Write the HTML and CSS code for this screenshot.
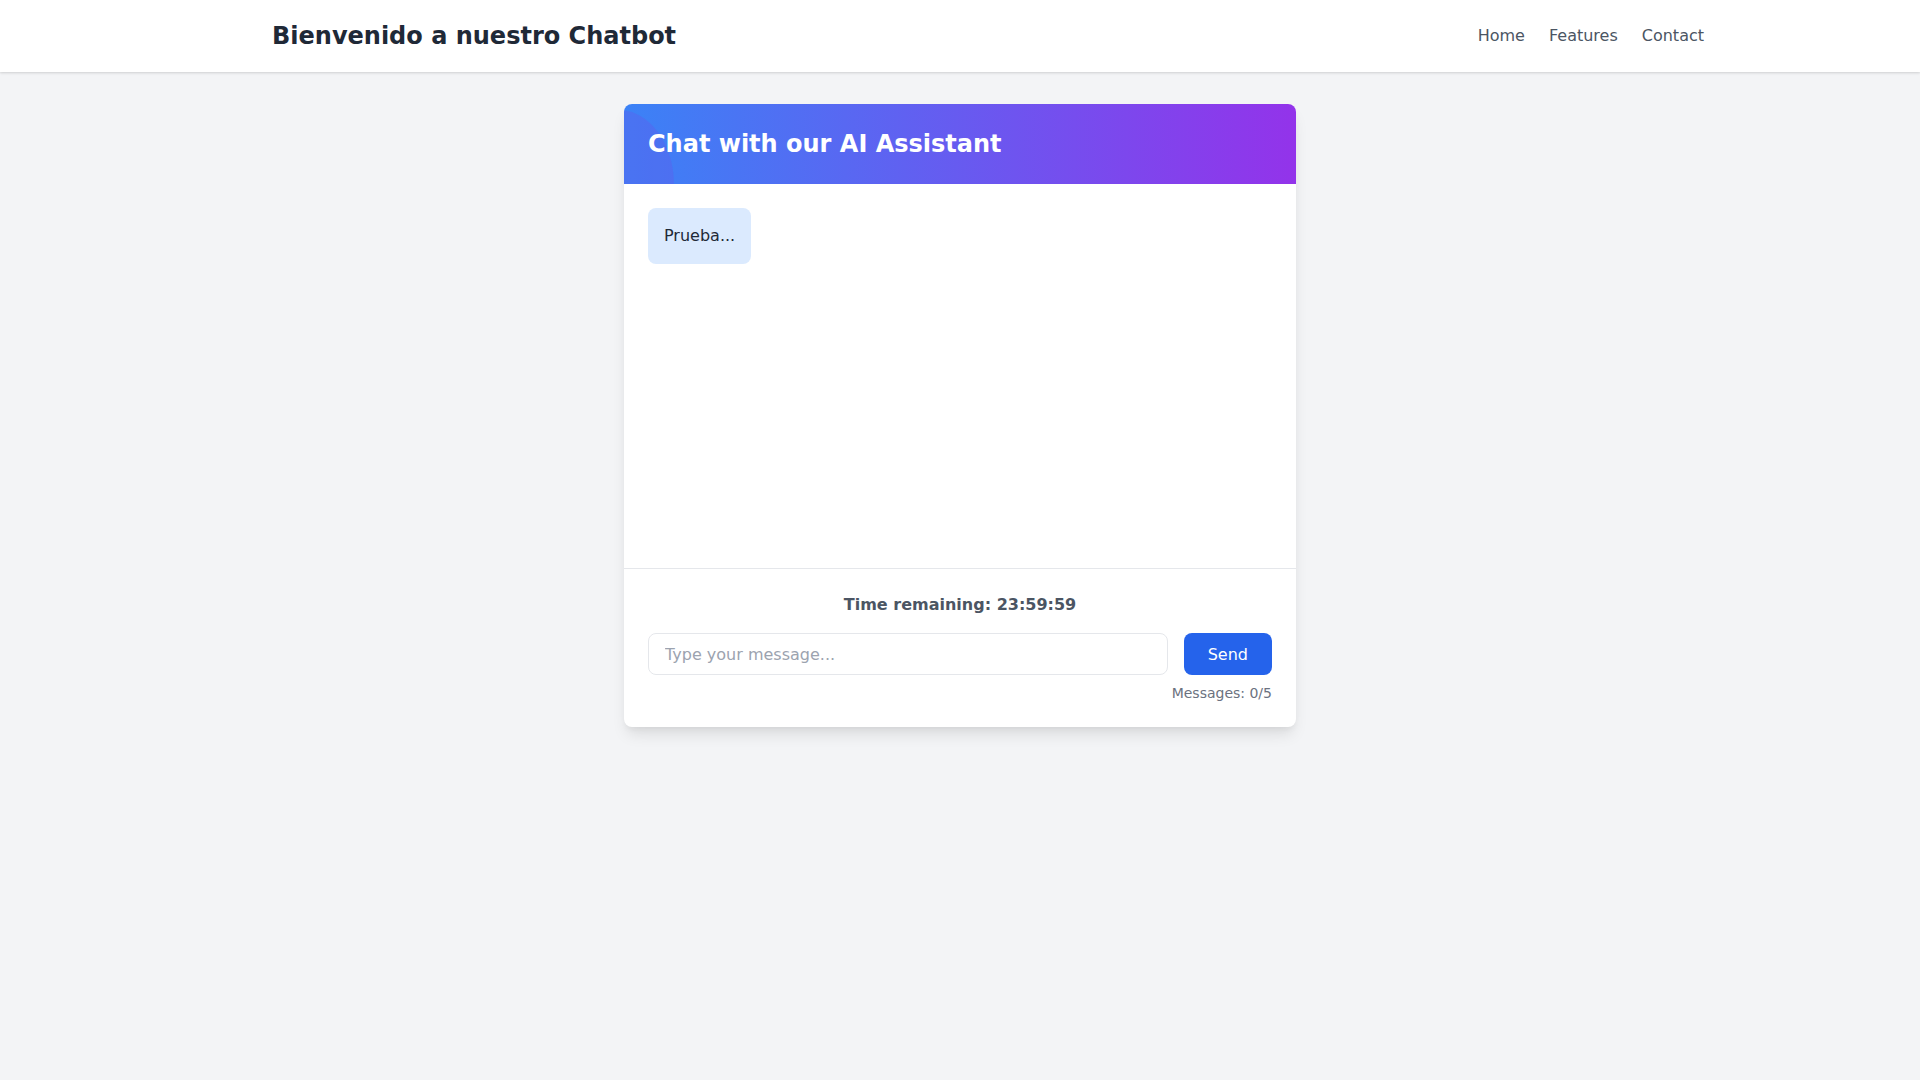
FILE: index.html
```html
<!DOCTYPE html>
<html lang="es">
<head>
<meta charset="utf-8">
<title>Chatbot</title>
<link rel="stylesheet" href="styles.css">
</head>
<body>
<header class="topbar">
  <h1 class="brand">Bienvenido a nuestro Chatbot</h1>
  <nav class="nav">
    <a href="#">Home</a>
    <a href="#">Features</a>
    <a href="#">Contact</a>
  </nav>
</header>
<main class="main">
  <section class="card">
    <div class="card-head">
      <span class="blob"></span>
      <h2>Chat with our AI Assistant</h2>
    </div>
    <div class="messages">
      <div class="bubble">Prueba...</div>
    </div>
    <div class="footer">
      <p class="timer">Time remaining: 23:59:59</p>
      <div class="row">
        <input class="input" type="text" placeholder="Type your message...">
        <button class="send">Send</button>
      </div>
      <p class="count">Messages: 0/5</p>
    </div>
  </section>
</main>
</body>
</html>
```

FILE: styles.css
```css
* { box-sizing: border-box; }
html, body { margin: 0; padding: 0; }
body {
  background: #f3f4f6;
  font-family: "DejaVu Sans", sans-serif;
  color: #1f2937;
  min-height: 1080px;
}
.topbar {
  height: 72px;
  background: #ffffff;
  box-shadow: 0 1px 3px rgba(0,0,0,0.1), 0 1px 2px rgba(0,0,0,0.06);
  display: flex;
  align-items: center;
  justify-content: space-between;
  padding: 0 216px 0 272px;
}
.brand {
  margin: 0;
  font-size: 24px;
  line-height: 32px;
  font-weight: bold;
  color: #1f2937;
}
.nav { display: flex; gap: 24px; }
.nav a {
  color: #4b5563;
  text-decoration: none;
  font-size: 16px;
  line-height: 24px;
}
.main {
  padding-top: 32px;
  display: flex;
  justify-content: center;
}
.card {
  width: 672px;
  background: #ffffff;
  border-radius: 8px;
  box-shadow: 0 10px 15px -3px rgba(0,0,0,0.1), 0 4px 6px -2px rgba(0,0,0,0.05);
  overflow: hidden;
}
.card-head {
  position: relative;
  overflow: hidden;
  background: linear-gradient(to right, #3b82f6, #9333ea);
  padding: 24px;
}
.blob {
  position: absolute;
  left: -60px;
  top: 6px;
  width: 110px;
  height: 150px;
  border-radius: 50%;
  background: rgba(99, 90, 235, 0.35);
}
.card-head h2 {
  position: relative;
  margin: 0;
  color: #ffffff;
  font-size: 24px;
  line-height: 32px;
  font-weight: bold;
}
.messages {
  height: 384px;
  padding: 24px;
}
.bubble {
  display: inline-block;
  background: #dbeafe;
  border-radius: 8px;
  padding: 16px;
  font-size: 16px;
  line-height: 24px;
  color: #1f2937;
}
.footer {
  padding: 24px;
  border-top: 1px solid #e5e7eb;
}
.timer {
  margin: 0 0 16px;
  text-align: center;
  font-weight: bold;
  color: #4b5563;
  font-size: 16px;
  line-height: 24px;
}
.row { display: flex; gap: 16px; }
.input {
  flex: 1;
  height: 42px;
  border: 1px solid #e5e7eb;
  border-radius: 8px;
  padding: 8px 16px;
  font-family: "DejaVu Sans", sans-serif;
  font-size: 16px;
  color: #1f2937;
  outline: none;
}
.input::placeholder { color: #9ca3af; }
.send {
  height: 42px;
  background: #2563eb;
  color: #ffffff;
  border: none;
  border-radius: 8px;
  padding: 0 24px;
  font-family: "DejaVu Sans", sans-serif;
  font-size: 16px;
}
.count {
  margin: 8px 0 0;
  text-align: right;
  font-size: 14px;
  line-height: 20px;
  color: #6b7280;
}
```
